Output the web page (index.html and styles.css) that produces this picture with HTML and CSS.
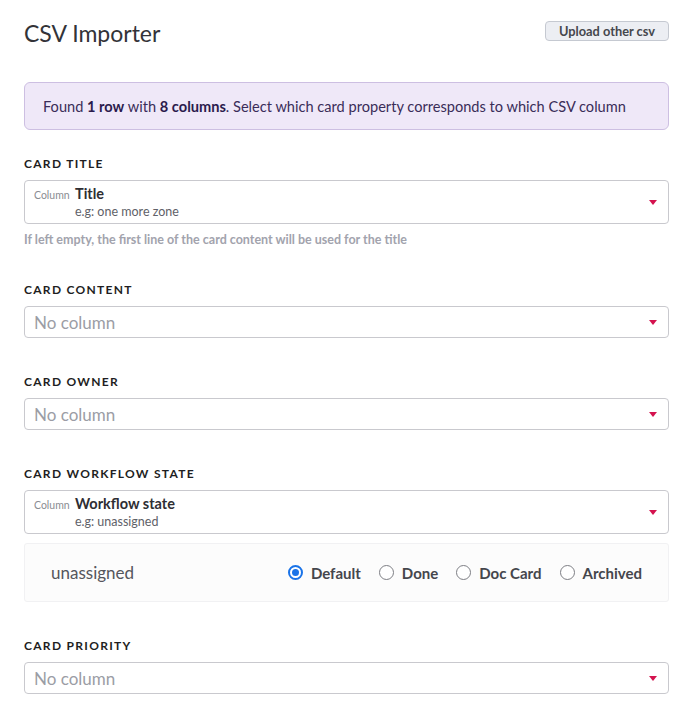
FILE: index.html
```html
<!DOCTYPE html>
<html>
<head>
<meta charset="utf-8">
<link rel="stylesheet" href="styles.css">
</head>
<body>
<div class="page">
  <div class="header">
    <h1 class="title">CSV Importer</h1>
    <button class="btn">Upload other csv</button>
  </div>
  <div class="info">Found <b>1 row</b> with <b>8 columns</b>. Select which card property corresponds to which CSV column</div>

  <div class="section first">
    <div class="label">Card title</div>
    <div class="select tall">
      <div class="sel-row">
        <span class="col-tag">Column</span>
        <div class="col-main">
          <div class="col-name">Title</div>
          <div class="col-ex">e.g: one more zone</div>
        </div>
      </div>
      <span class="arrow"></span>
    </div>
    <div class="help">If left empty, the first line of the card content will be used for the title</div>
  </div>

  <div class="section">
    <div class="label">Card content</div>
    <div class="select"><span class="placeholder">No column</span><span class="arrow"></span></div>
  </div>

  <div class="section">
    <div class="label">Card owner</div>
    <div class="select"><span class="placeholder">No column</span><span class="arrow"></span></div>
  </div>

  <div class="section">
    <div class="label">Card workflow state</div>
    <div class="select tall">
      <div class="sel-row">
        <span class="col-tag">Column</span>
        <div class="col-main">
          <div class="col-name">Workflow state</div>
          <div class="col-ex">e.g: unassigned</div>
        </div>
      </div>
      <span class="arrow"></span>
    </div>
    <div class="panel">
      <span class="state">unassigned</span>
      <div class="radios">
        <label class="radio"><span class="dot on"></span>Default</label>
        <label class="radio"><span class="dot"></span>Done</label>
        <label class="radio"><span class="dot"></span>Doc Card</label>
        <label class="radio"><span class="dot"></span>Archived</label>
      </div>
    </div>
  </div>

  <div class="section">
    <div class="label">Card priority</div>
    <div class="select"><span class="placeholder">No column</span><span class="arrow"></span></div>
  </div>
</div>
</body>
</html>
```

FILE: styles.css
```css
* { box-sizing: border-box; }
body {
  margin: 0;
  background: #fff;
  font-family: Lato, "Noto Sans", sans-serif;
  color: #333;
}
.page {
  padding: 14px 24px 0;
  width: 693px;
}
.header {
  display: flex;
  justify-content: space-between;
  align-items: center;
  height: 38px;
}
.title {
  margin: 0;
  font-size: 23px;
  font-weight: 400;
  color: #333338;
  line-height: 38px;
}
.btn {
  font-family: Lato, sans-serif;
  font-weight: 700;
  font-size: 12.8px;
  color: #45474d;
  background: #eceef3;
  border: 1px solid #c5c9d1;
  border-radius: 4px;
  height: 20px;
  width: 124px;
  padding: 0;
  margin-top: -4px;
}
.info {
  margin-top: 30px;
  height: 48px;
  background: #efe8f8;
  border: 1px solid #cdbfe2;
  border-radius: 6px;
  padding: 0 18px;
  display: flex;
  align-items: center;
  font-size: 14.6px;
  color: #3a2d58;
  white-space: pre;
}
.info b { color: #2b1b4d; font-weight: 700; }
.section { margin-top: 36px; }
.section.first { margin-top: 26px; }
.label {
  font-size: 12px;
  font-weight: 700;
  text-transform: uppercase;
  letter-spacing: 1.3px;
  line-height: 16px;
  color: #1e1e22;
  margin-bottom: 8px;
}
.select {
  position: relative;
  height: 32px;
  border: 1px solid #c9c9ce;
  border-radius: 4px;
  display: flex;
  align-items: center;
  padding: 0 30px 0 9px;
}
.select.tall { height: 44px; align-items: flex-start; padding-top: 4px; }
.placeholder { font-size: 17px; color: #9b9da5; }
.sel-row { display: flex; align-items: baseline; }
.col-tag { font-size: 10.5px; color: #8a8c92; width: 41px; }
.col-name { font-size: 14.5px; font-weight: 700; color: #2e2e33; line-height: 18px; }
.col-ex { font-size: 12.5px; color: #606168; line-height: 17px; }
.arrow {
  position: absolute;
  right: 11px;
  top: 50%;
  margin-top: -2px;
  width: 0;
  height: 0;
  border-left: 4.5px solid transparent;
  border-right: 4.5px solid transparent;
  border-top: 5px solid #d4134f;
}
.help {
  margin-top: 9px;
  margin-bottom: -1px;
  font-size: 12.5px;
  font-weight: 700;
  color: #a2a3ad;
  line-height: 14px;
}
.panel {
  margin-top: 9px;
  height: 59px;
  background: #fcfcfc;
  border: 1px solid #f1f1f3;
  border-radius: 3px;
  display: flex;
  justify-content: space-between;
  align-items: center;
  padding: 0 26px 0 26px;
}
.state { font-size: 17px; color: #55565c; }
.radios { display: flex; gap: 18px; }
.radio {
  display: flex;
  align-items: center;
  gap: 8px;
  font-size: 15px;
  font-weight: 700;
  color: #45464c;
}
.dot {
  width: 15px;
  height: 15px;
  border-radius: 50%;
  border: 1.5px solid #7d7e84;
  background: #fff;
  position: relative;
}
.dot.on { border: 2px solid #1a73e8; }
.dot.on::after {
  content: "";
  position: absolute;
  left: 2px; top: 2px;
  width: 7px; height: 7px;
  border-radius: 50%;
  background: #1a73e8;
}
```
